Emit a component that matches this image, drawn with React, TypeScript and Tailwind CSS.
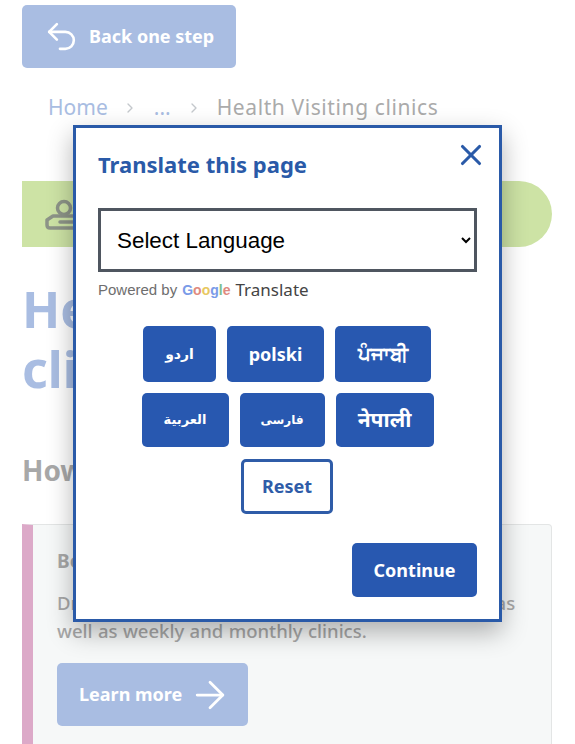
import { Undo2, ArrowRight, X, ChevronRight } from "lucide-react";

const sans = "font-['Noto_Sans','Open_Sans',sans-serif]";

function LangButton({ label, className }: { label: string; className: string }) {
  return (
    <button className={`flex items-center justify-center rounded-[5px] bg-[#2858b0] text-white font-bold ${className}`}>
      {label}
    </button>
  );
}

export default function App() {
  return (
    <div className={`relative h-[744px] w-[575px] overflow-hidden bg-white ${sans}`}>
      <div className="flex flex-col pl-[22px] pr-[23px] pt-[5px]">
        <button className="flex h-[63px] w-[214px] items-center gap-[9px] rounded-[5px] bg-[#a9bde2] pl-[21px] text-[18px] font-bold text-white">
          <Undo2 size={37} strokeWidth={1.7} />
          <span>Back one step</span>
        </button>

        <nav className="mt-[25px] flex h-[30px] items-center pl-[26px] text-[21px] text-[#a9bde2]">
          <span>Home</span>
          <ChevronRight size={16} className="ml-[14px] text-[#c4c8cc]" />
          <span className="ml-[16px]">...</span>
          <ChevronRight size={16} className="ml-[15px] text-[#c4c8cc]" />
          <span className="ml-[15px] tracking-[0.6px] text-[#ababab]">Health Visiting clinics</span>
        </nav>

        <div className="mt-[58px] flex h-[66px] w-[530px] items-center rounded-r-[33px] bg-[#cde3a5] pl-[22px]">
          <svg width="34" height="34" viewBox="0 0 34 34" fill="none" stroke="#8d9488" strokeWidth="3.5" strokeLinejoin="round" strokeLinecap="round">
            <circle cx="20" cy="11" r="6.5" />
            <path d="M3 23l6-4h20c2 0 4 2 4 4v5c0 2-2 3-4 3H6c-2 0-3-1-3-3z" />
            <path d="M16 25h16" />
          </svg>
        </div>

        <h1 className="mt-[32px] text-[50px] font-bold leading-[60px] text-[#a9bde2]">Health Visiting<br />clinics</h1>

        <h2 className="mt-[52px] text-[28px] font-bold leading-[38px] text-[#a8a8a8]">How to access</h2>

        <section className="mt-[35px] h-[240px] rounded-r-[4px] border border-l-[11px] border-[#e3e5e5] border-l-[#dca9c8] bg-[#f6f8f8] pl-[24px] pr-[28px]">
          <h3 className="mt-[22px] text-[19px] font-bold leading-[28px] text-[#a8a8a8]">Book</h3>
          <p className="mt-[14px] text-[18.5px] font-medium leading-[28px] text-[#a8a8a8] [word-spacing:0.6px]">
            Drop-in sessions are offered at many city venues as well as weekly and monthly clinics.
          </p>
          <button className="mt-[18px] flex h-[63px] w-[191px] items-center gap-[6px] rounded-[5px] bg-[#a9bde2] pl-[22px] text-[18px] font-bold text-white">
            <span>Learn more</span>
            <ArrowRight size={44} strokeWidth={1.5} />
          </button>
        </section>
      </div>

      <div className="absolute left-[73px] top-[125px] flex h-[497px] w-[429px] flex-col border-[3px] border-[#2a5aa8] bg-white px-[22px] shadow-[0_10px_24px_rgba(0,0,0,0.3)]">
        <div className="relative flex h-[80px] shrink-0 items-start">
          <h2 className="mt-[20px] text-[22px] font-bold leading-[32px] text-[#2a5aa8]">Translate this page</h2>
          <X size={34} strokeWidth={2.2} className="absolute right-[-11px] top-[10px] text-[#2a5aa8]" />
        </div>

        <select className="h-[64px] w-[379px] shrink-0 border-[3px] border-[#4f5660] bg-white pl-[12px] font-['Liberation_Sans',sans-serif] text-[22.4px] text-black">
          <option>Select Language</option>
        </select>

        <div className="mt-[7px] flex h-[22px] items-center font-['Liberation_Sans',sans-serif] text-[15px] text-[#6e6e6e]">
          <span>Powered by</span>
          <span className="ml-[5px] text-[14px] font-bold">
            <span className="text-[#7a9be8]">G</span>
            <span className="text-[#e08a80]">o</span>
            <span className="text-[#e8c860]">o</span>
            <span className="text-[#7a9be8]">g</span>
            <span className="text-[#80c090]">l</span>
            <span className="text-[#e08a80]">e</span>
          </span>
          <span className={`ml-[5px] text-[17px] text-[#444] ${sans}`}>Translate</span>
        </div>

        <div className="mt-[25px] flex flex-col items-center gap-[11px]">
          <div className="ml-[-1px] flex gap-[11px]">
            <LangButton label="اردو" className="h-[56px] w-[73px] font-['DejaVu_Sans',sans-serif] text-[14px]" />
            <LangButton label="polski" className="h-[56px] w-[97px] text-[18px]" />
            <LangButton label="ਪੰਜਾਬੀ" className="h-[56px] w-[96px] text-[20px]" />
          </div>
          <div className="flex gap-[11px]">
            <LangButton label="العربية" className="h-[54px] w-[87px] font-['DejaVu_Sans',sans-serif] text-[13px]" />
            <LangButton label="فارسی" className="h-[54px] w-[85px] font-['DejaVu_Sans',sans-serif] text-[12px]" />
            <LangButton label="नेपाली" className="h-[54px] w-[98px] text-[21px]" />
          </div>
          <button className="ml-[-1px] mt-[1px] h-[55px] w-[92px] rounded-[5px] border-[3px] border-[#2f5ca8] bg-white text-[18px] font-bold text-[#2f5ca8]">
            Reset
          </button>
        </div>

        <div className="mt-[29px] flex justify-end">
          <button className="h-[54px] w-[125px] rounded-[5px] bg-[#2858b0] text-[18px] font-bold text-white">Continue</button>
        </div>
      </div>
    </div>
  );
}
